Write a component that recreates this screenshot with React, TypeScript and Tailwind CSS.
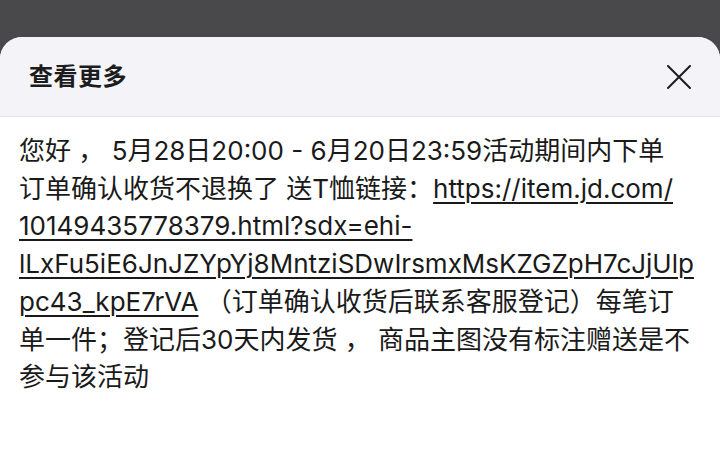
import React from "react";

const font = { fontFamily: 'Inter, "Noto Sans CJK SC", sans-serif' };

const Link: React.FC<{ children: React.ReactNode }> = ({ children }) => (
  <span className="underline decoration-[1.5px] underline-offset-[4px]">{children}</span>
);

export default function App() {
  return (
    <div className="h-[471px] w-[720px] overflow-hidden bg-[#49494b]" style={font}>
      <div className="mt-[37px] flex h-[434px] flex-col overflow-hidden rounded-t-[22px] bg-white">
        <div className="flex h-[80px] shrink-0 items-center justify-between border-b border-[#e4e4e8] bg-[#f4f4f8] pl-[29px] pr-[28px]">
          <h2 className="text-[24px] font-semibold tracking-[0.5px] text-[#1c1c1e]">查看更多</h2>
          <button className="flex h-[26px] w-[26px] items-center justify-center text-[#1c1c1e]">
            <svg width="24" height="24" viewBox="0 0 24 24" fill="none" stroke="currentColor" strokeWidth="2" strokeLinecap="round">
              <path d="M1 1L23 23M23 1L1 23" />
            </svg>
          </button>
        </div>
        <div className="whitespace-nowrap px-[19px] pt-[15px] text-[26px] leading-[37.7px] text-[#1a1a1a]">
          <div>您好 ， 5月28日20:00 - 6月20日23:59活动期间内下单</div>
          <div>
            订单确认收货不退换了 送T恤链接：<Link>https://item.jd.com/</Link>
          </div>
          <div>
            <Link>10149435778379.html?sdx=ehi-</Link>
          </div>
          <div>
            <Link>lLxFu5iE6JnJZYpYj8MntziSDwIrsmxMsKZGZpH7cJjUlp</Link>
          </div>
          <div>
            <Link>pc43_kpE7rVA</Link> （订单确认收货后联系客服登记）每笔订
          </div>
          <div>单一件；登记后30天内发货 ， 商品主图没有标注赠送是不</div>
          <div>参与该活动</div>
        </div>
      </div>
    </div>
  );
}
